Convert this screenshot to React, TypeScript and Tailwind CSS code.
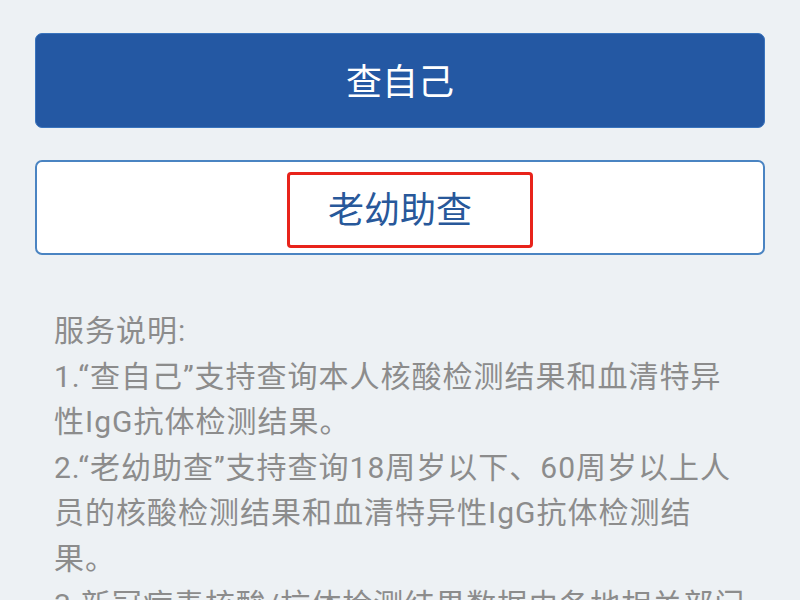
// Line breaks follow the reference screenshot exactly.
const lines = [
  "服务说明:",
  "1.“查自己”支持查询本人核酸检测结果和血清特异",
  "性IgG抗体检测结果。",
  "2.“老幼助查”支持查询18周岁以下、60周岁以上人",
  "员的核酸检测结果和血清特异性IgG抗体检测结",
  "果。",
  "3.新冠病毒核酸/抗体检测结果数据由各地相关部门",
]

export default function App() {
  return (
    <div
      className="h-[600px] w-[800px] overflow-hidden bg-[#edf1f4] px-[35px] pt-[33px]"
      style={{ fontFamily: 'Roboto, "Noto Sans CJK SC", sans-serif' }}
    >
      {/* 查自己 */}
      <button className="flex h-[95px] w-full items-center justify-center rounded-[7px] border border-[#3a74bd] bg-[#2458a3] pt-[4px] text-[36px] text-white">
        查自己
      </button>

      {/* 老幼助查 — the red frame is an annotation laid over the button */}
      <div className="relative mt-[32px]">
        <button className="flex h-[95px] w-full items-center justify-center rounded-[7px] border-2 border-[#4a84c2] bg-white pt-[6px] text-[36px] text-[#28589a]">
          老幼助查
        </button>
        <div className="pointer-events-none absolute left-[252px] top-[12px] h-[76px] w-[246px] rounded-[4px] border-[3px] border-[#e8231b]" />
      </div>

      {/* 服务说明 */}
      <div className="mt-[53px] pl-[19px] text-[30px] leading-[45.6px] tracking-[1px] text-[#8c8c8c]">
        {lines.map((line) => (
          <p key={line} className="whitespace-nowrap">
            {line}
          </p>
        ))}
      </div>
    </div>
  )
}
